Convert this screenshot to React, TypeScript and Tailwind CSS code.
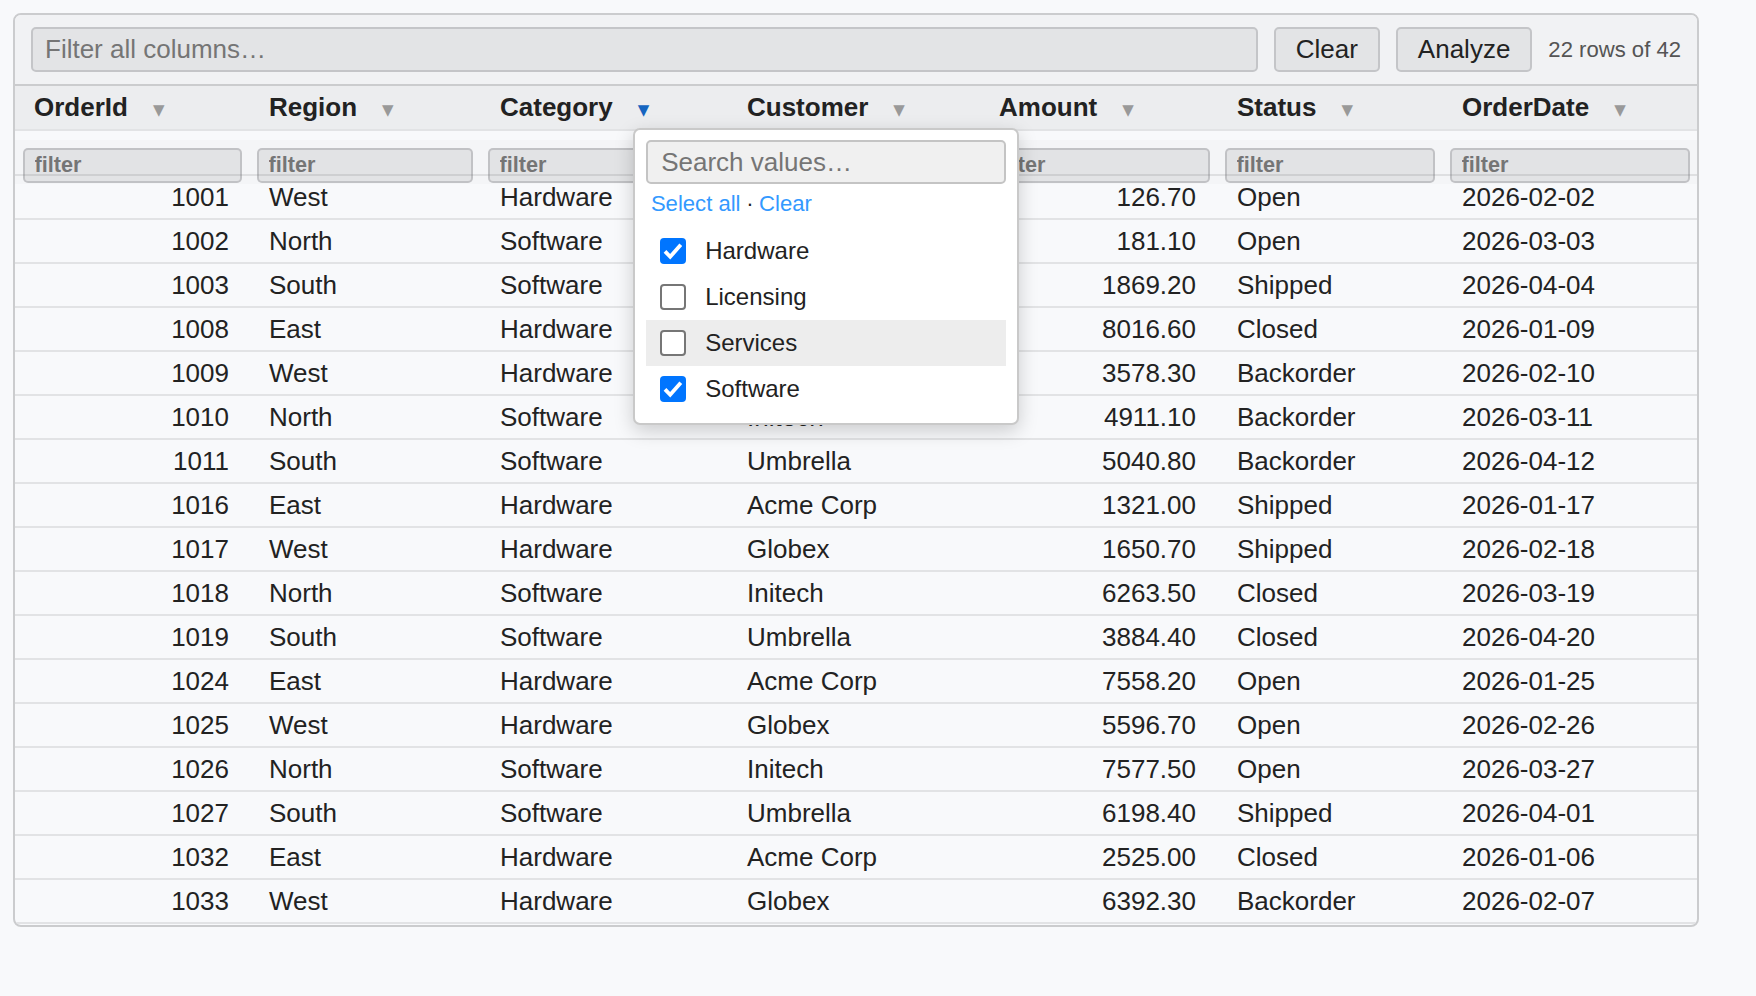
const columns = ["OrderId", "Region", "Category", "Customer", "Amount", "Status", "OrderDate"];

const rows = [
  ["1001", "West", "Hardware", "Globex", "126.70", "Open", "2026-02-02"],
  ["1002", "North", "Software", "Initech", "181.10", "Open", "2026-03-03"],
  ["1003", "South", "Software", "Umbrella", "1869.20", "Shipped", "2026-04-04"],
  ["1008", "East", "Hardware", "Acme Corp", "8016.60", "Closed", "2026-01-09"],
  ["1009", "West", "Hardware", "Globex", "3578.30", "Backorder", "2026-02-10"],
  ["1010", "North", "Software", "Initech", "4911.10", "Backorder", "2026-03-11"],
  ["1011", "South", "Software", "Umbrella", "5040.80", "Backorder", "2026-04-12"],
  ["1016", "East", "Hardware", "Acme Corp", "1321.00", "Shipped", "2026-01-17"],
  ["1017", "West", "Hardware", "Globex", "1650.70", "Shipped", "2026-02-18"],
  ["1018", "North", "Software", "Initech", "6263.50", "Closed", "2026-03-19"],
  ["1019", "South", "Software", "Umbrella", "3884.40", "Closed", "2026-04-20"],
  ["1024", "East", "Hardware", "Acme Corp", "7558.20", "Open", "2026-01-25"],
  ["1025", "West", "Hardware", "Globex", "5596.70", "Open", "2026-02-26"],
  ["1026", "North", "Software", "Initech", "7577.50", "Open", "2026-03-27"],
  ["1027", "South", "Software", "Umbrella", "6198.40", "Shipped", "2026-04-01"],
  ["1032", "East", "Hardware", "Acme Corp", "2525.00", "Closed", "2026-01-06"],
  ["1033", "West", "Hardware", "Globex", "6392.30", "Backorder", "2026-02-07"],
];

const options = [
  { label: "Hardware", checked: true, hover: false },
  { label: "Licensing", checked: false, hover: false },
  { label: "Services", checked: false, hover: true },
  { label: "Software", checked: true, hover: false },
];

const gridCols = "grid grid-cols-[234px_231px_247px_252px_238px_225px_1fr]";

function Checkbox({ checked }: { checked: boolean }) {
  if (checked) {
    return (
      <span className="flex h-[26px] w-[26px] shrink-0 items-center justify-center rounded-[4px] bg-[#0075ff]">
        <svg width="26" height="26" viewBox="0 0 26 26" fill="none">
          <path d="M5 13.4 L10.2 18.8 L20.8 6.8" stroke="#fff" strokeWidth="3.8" />
        </svg>
      </span>
    );
  }
  return <span className="h-[26px] w-[26px] shrink-0 rounded-[4px] border-2 border-[#767676] bg-white" />;
}

function FilterMenu() {
  return (
    <div className="absolute left-[617.7px] top-[112.5px] z-20 h-[297px] w-[386.5px] rounded-[7px] border-2 border-[#c9c9c9] bg-white px-[11.5px] pt-[10.7px] shadow-[0_6px_19px_rgba(0,0,0,0.18)]">
      <input
        readOnly
        placeholder="Search values…"
        className="h-[44px] w-full rounded-[5px] border-2 border-[#c4c4c4] bg-[#f0f0f0] px-[13px] text-[26px] outline-none placeholder:text-[#757575]"
      />
      <div className="flex h-[38px] items-center pl-[4.7px] text-[22.1px] text-[#222]">
        <span className="text-[#3399ff]">Select all</span>
        <span className="px-[5.6px]">·</span>
        <span className="text-[#3399ff]">Clear</span>
      </div>
      <div className="mt-[6.3px]">
        {options.map((opt) => (
          <div
            key={opt.label}
            className={`flex h-[46px] items-center gap-[19px] pl-[14px] text-[24px] text-[#222] ${opt.hover ? "bg-[#ededed]" : ""}`}
          >
            <Checkbox checked={opt.checked} />
            {opt.label}
          </div>
        ))}
      </div>
    </div>
  );
}

export default function App() {
  return (
    <div className="h-[996px] overflow-hidden bg-[#f8f9fb] pl-[13px] pt-[13px] font-['Liberation_Sans',sans-serif] text-[26px] text-[#222]">
      <div className="relative h-[914px] w-[1686px] overflow-hidden rounded-[8px] border-2 border-[#cbccce]">
        <div className="flex items-center gap-[16px] border-b-2 border-[#cbccce] bg-[#f1f2f4] px-[16px] py-[12px]">
          <input
            readOnly
            placeholder="Filter all columns…"
            className="h-[45px] min-w-0 flex-1 rounded-[5px] border-2 border-[#c4c5c8] bg-[#e3e4e6] px-[12px] text-[26px] outline-none placeholder:text-[#757575]"
          />
          <button className="h-[45px] rounded-[5px] border-2 border-[#c4c5c8] bg-[#e3e4e6] px-[20px]">Clear</button>
          <button className="h-[45px] rounded-[5px] border-2 border-[#c4c5c8] bg-[#e3e4e6] px-[20px]">Analyze</button>
          <span className="text-[22.1px] text-[#555]">22 rows of 42</span>
        </div>

        <div className={`${gridCols} h-[44.5px] items-center border-b-2 border-[#e2e3e5] bg-[#ecedef] font-bold`}>
          {columns.map((col, i) => (
            <div key={col} className={`flex items-center ${i === 0 ? "pl-[19px]" : "pl-[20px]"}`}>
              {col}
              <span className={`ml-[25px] mt-[5px] font-['DejaVu_Sans',sans-serif] text-[15px] font-normal ${col === "Category" ? "text-[#1565c0]" : "text-[#999]"}`}>▼</span>
            </div>
          ))}
        </div>

        <div className={`${gridCols} relative z-10 mb-[-10px] mt-[9.5px] h-[44px] bg-[rgba(0,0,0,0.015)] pt-[4px]`}>
          {columns.map((col) => (
            <div key={col} className="px-[7.5px]">
              <input
                readOnly
                placeholder="filter"
                className="h-[35px] w-full rounded-[5px] border-2 border-[rgba(120,122,128,0.32)] bg-[rgba(0,0,0,0.07)] px-[10px] text-[21.67px] font-bold outline-none placeholder:text-[#757575]"
              />
            </div>
          ))}
        </div>

        <div className="border-t-2 border-[#e2e3e5]">
          {rows.map((row) => (
            <div key={row[0]} className={`${gridCols} h-[44px] items-center border-b-2 border-[#e2e3e5]`}>
              {row.map((cell, i) => (
                <div key={i} className={i === 0 ? "pr-[20px] text-right" : i === 4 ? "pr-[21px] text-right" : "pl-[20px]"}>
                  {cell}
                </div>
              ))}
            </div>
          ))}
        </div>

        <FilterMenu />
      </div>
    </div>
  );
}
